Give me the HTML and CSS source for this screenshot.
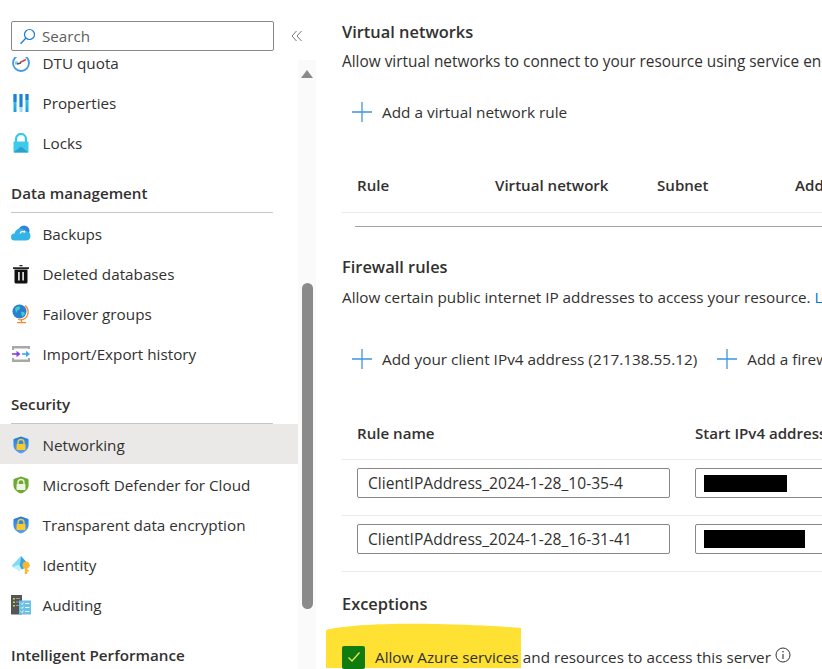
FILE: index.html
```html
<!DOCTYPE html>
<html lang="en">
<head>
<meta charset="utf-8">
<title>Networking</title>
<link rel="stylesheet" href="styles.css">
</head>
<body>
<svg class="defs" width="0" height="0" aria-hidden="true">
  <defs>
    <linearGradient id="blue" x1="0" y1="0" x2="0" y2="1"><stop offset="0" stop-color="#1b7fe0"/><stop offset="1" stop-color="#5ea0ef"/></linearGradient>
    <linearGradient id="cyan" x1="0" y1="0" x2="0" y2="1"><stop offset="0" stop-color="#32d4f5"/><stop offset="1" stop-color="#1d9fd8"/></linearGradient>
    <symbol id="shield" viewBox="0 0 18 20"><path d="M9 .5 16.500 3c.6.2.9.6.9 1.200v6.300c0 4-3.800 7.200-8.400 9-4.600-1.800-8.400-5-8.400-9V4.200C.6 3.600.9 3.200 1.500 3z"/></symbol>
  </defs>
</svg>
<div class="page">
  <aside class="sidebar">
    <div class="search-row">
      <div class="search">
        <svg class="search-icon" width="17" height="17" viewBox="0 0 17 17"><circle cx="10.500" cy="6.500" r="5" fill="none" stroke="#1b7fd4" stroke-width="1.200"/><path d="M7 10 1.500 15.800" stroke="#1b7fd4" stroke-width="1.300" fill="none"/></svg>
        <span>Search</span>
      </div>
      <svg class="collapse" width="12" height="12" viewBox="0 0 12 12"><path d="M5.500 1 1 6l4.500 5M10.500 1 6 6l4.500 5" fill="none" stroke="#777" stroke-width="1"/></svg>
    </div>
    <div class="nav-wrap">
      <nav class="nav">
        <div class="nav-list">
          <a class="item"><svg class="ic" viewBox="0 0 20 20"><circle cx="10" cy="10" r="8" fill="none" stroke="#3f9ae8" stroke-width="1.800"/><path d="M4 8.500h3v3H4z" fill="#7cc8f0"/><path d="M9 9.500l6-3" stroke="#d0493a" stroke-width="1.500"/><path d="M6 11l4-1" stroke="#555" stroke-width="1.300"/></svg><span>DTU quota</span></a>
          <a class="item"><svg class="ic" viewBox="0 0 20 20"><rect x="2.500" y="1" width="3" height="18" fill="url(#cyan)"/><rect x="2.500" y="1" width="3" height="8" fill="#1d7fd8"/><rect x="8.500" y="1" width="3" height="18" fill="#9fdcf0"/><rect x="8.500" y="1" width="3" height="13" fill="#1d7fd8"/><rect x="14.500" y="1" width="3" height="18" fill="url(#cyan)"/><rect x="14.500" y="1" width="3" height="6" fill="#1d7fd8"/></svg><span>Properties</span></a>
          <a class="item"><svg class="ic" viewBox="0 0 20 20"><path d="M5 9V6a5 5 0 0 1 10 0v3" fill="none" stroke="#32c8f0" stroke-width="2.200"/><rect x="2.500" y="8.500" width="15" height="11" rx="1" fill="#3ecbea"/><path d="M2.500 19.500 10 13.500l7.500 6z" fill="#2a9fd0"/></svg><span>Locks</span></a>
        </div>
        <h3 class="group">Data management</h3>
        <div class="nav-list">
          <a class="item"><svg class="ic" viewBox="0 0 20 20"><circle cx="13" cy="7" r="5.500" fill="#2f86d8"/><path d="M3.500 16.500a3.500 3.500 0 0 1 0-7c.6-3 3-5 6-5 2 0 3.500 1 4.500 2.500 3 0 5.500 1.500 5.500 5 0 3-2 4.500-5 4.500z" fill="#33b4e8"/><path d="M9 9.500c1-2 3-2.500 5-1.500" fill="none" stroke="#fff" stroke-width="1.200"/><path d="M13.500 6l1.200 2.200-2.400.5z" fill="#fff"/></svg><span>Backups</span></a>
          <a class="item"><svg class="ic" viewBox="0 0 20 20"><path d="M8.500 1h3v1.200h-3z M2 3.300h16v1.600H2z" fill="#222"/><path d="M3.500 5.500h13V18a1.500 1.500 0 0 1-1.500 1.500H5A1.500 1.500 0 0 1 3.500 18z" fill="#111"/><path d="M7 8h1.800v8.500H7zM11.200 8H13v8.500h-1.800z" fill="#d8d8d8"/></svg><span>Deleted databases</span></a>
          <a class="item"><svg class="ic" viewBox="0 0 20 20"><path d="M14 1.500c4 3 4.300 9 .5 12.500-2 1.700-5 2.300-7.500 1.500" fill="none" stroke="#f28a2e" stroke-width="1.200"/><path d="M10.500 15.500V18M6 18.700h9" stroke="#f28a2e" stroke-width="1.300"/><circle cx="8.500" cy="7.500" r="7" fill="#2a7fd0"/><path d="M4 4.500c2-2 4-2.500 5-1.500.5 1.500-1 3-2.500 3.500L5 9zM10 8c2-.5 4 .5 4 2l-3 3z" fill="#3ed0c0"/></svg><span>Failover groups</span></a>
          <a class="item"><svg class="ic" viewBox="0 0 20 20"><path d="M1 2h18v2.500H1zM1 15.500h18V18H1zM1 2h2v4H1zM17 2h2v3h-2zM1 14h2v4H1zM17 14h2v4h-2z" fill="#a8a8a8"/><path d="M1 10h5.500" stroke="#8a3fdc" stroke-width="1.600"/><path d="M5.500 6.800 9.500 10l-4 3.200z" fill="#8a3fdc"/><path d="M11 10h5" stroke="#3fa8e8" stroke-width="1.600"/><path d="M15 6.800 19 10l-4 3.200z" fill="#3fa8e8"/></svg><span>Import/Export history</span></a>
        </div>
        <h3 class="group">Security</h3>
        <div class="nav-list">
          <a class="item active"><svg class="ic" viewBox="0 0 20 20"><use href="#shield" x="1.500" y="1" width="17" height="18" fill="url(#blue)"/><path d="M7 9V7.500a3 3 0 0 1 6 0V9" fill="none" stroke="#f7c92e" stroke-width="1.400"/><rect x="5.500" y="9" width="9" height="6" rx=".8" fill="#f7c92e"/></svg><span>Networking</span></a>
          <a class="item"><svg class="ic" viewBox="0 0 20 20"><use href="#shield" x="1.500" y="1" width="17" height="18" fill="#6eaa32"/><path d="M7 9V7.500a3 3 0 0 1 6 0V9" fill="none" stroke="#eef5e2" stroke-width="1.400"/><rect x="5.500" y="9" width="9" height="6" rx=".8" fill="#eef5e2"/></svg><span>Microsoft Defender for Cloud</span></a>
          <a class="item"><svg class="ic" viewBox="0 0 20 20"><use href="#shield" x="1.500" y="1" width="17" height="18" fill="url(#blue)"/><path d="M7 9V7.500a3 3 0 0 1 6 0V9" fill="none" stroke="#f7c92e" stroke-width="1.400"/><rect x="5.500" y="9" width="9" height="6" rx=".8" fill="#f7c92e"/></svg><span>Transparent data encryption</span></a>
          <a class="item"><svg class="ic" viewBox="0 0 20 20"><path d="M10 1 .5 11 8 15.500z" fill="#7fdcf5"/><path d="M10 1 8 15.500l11-4.500z" fill="#35a5e6"/><path d="M1.500 12 8 16l3-1.300-3-5z" fill="#c4f0fb"/><circle cx="15" cy="10" r="3.500" fill="#fbb62c"/><path d="M13.800 12h2.400v7h-2.400zM16 15h1.800v1.500H16z" fill="#fbb62c"/></svg><span>Identity</span></a>
          <a class="item"><svg class="ic" viewBox="0 0 20 20"><rect x="0" y="0" width="11" height="19.500" fill="#555"/><path d="M2 3h2v1.600H2zM2 6.500h2v1.600H2zM2 10h2v1.600H2z" fill="#c4d840"/><path d="M5 3h4v1H5zM5 6.500h4v1H5zM5 10h4v1H5z" fill="#999"/><rect x="8" y="5.500" width="12" height="14" fill="#6cc0e4"/><path d="M10 8.500l1 1 1.500-2M10 12.500l1 1 1.500-2M10 16.500l1 1 1.500-2" fill="none" stroke="#fff" stroke-width=".9"/><path d="M14 8.500h4.500M14 12.500h4.500M14 16.500h4.500" stroke="#e6f6fc" stroke-width="1"/></svg><span>Auditing</span></a>
        </div>
        <h3 class="group group-last">Intelligent Performance</h3>
      </nav>
      <div class="scrollbar">
        <span class="arrow"></span>
        <span class="thumb"></span>
      </div>
    </div>
  </aside>

  <main class="main">
    <section class="vnet">
      <h2>Virtual networks</h2>
      <p class="desc">Allow virtual networks to connect to your resource using service endpoints.</p>
      <div class="actions">
        <a class="add"><svg class="plus" viewBox="0 0 20 20"><path d="M0 10h20M10 0v20" stroke="#3d94df" stroke-width="1.300"/></svg>Add a virtual network rule</a>
      </div>
      <div class="thead vnet-head">
        <span class="c-rule">Rule</span><span class="c-net">Virtual network</span><span class="c-sub">Subnet</span><span>Address range</span>
      </div>
      <div class="hscroll"></div>
    </section>

    <section class="fw">
      <h2>Firewall rules</h2>
      <p class="desc">Allow certain public internet IP addresses to access your resource. <a class="link">Learn more</a></p>
      <div class="actions fw-actions">
        <a class="add"><svg class="plus" viewBox="0 0 20 20"><path d="M0 10h20M10 0v20" stroke="#3d94df" stroke-width="1.300"/></svg>Add your client IPv4 address (217.138.55.12)</a>
        <a class="add"><svg class="plus" viewBox="0 0 20 20"><path d="M0 10h20M10 0v20" stroke="#3d94df" stroke-width="1.300"/></svg>Add a firewall rule</a>
      </div>
      <div class="thead fw-head">
        <span class="c-name">Rule name</span><span>Start IPv4 address</span>
      </div>
      <div class="row">
        <div class="field name">ClientIPAddress_2024-1-28_10-35-4</div>
        <div class="field ip"><span class="redact r1"></span></div>
      </div>
      <div class="row">
        <div class="field name">ClientIPAddress_2024-1-28_16-31-41</div>
        <div class="field ip"><span class="redact r2"></span></div>
      </div>
    </section>

    <section class="exc">
      <svg class="marker" width="195" height="45" viewBox="0 0 195 45"><path d="M0 7C20 2 60 0 110 1c30 .5 60 2 85 4v40H0z" fill="#fee133"/></svg>
      <h2>Exceptions</h2>
      <div class="check-row">
        <span class="check"><svg width="14" height="12" viewBox="0 0 14 12"><path d="M1.500 6.500 5 10l7.500-8.500" fill="none" stroke="#e8e85a" stroke-width="1.300"/></svg></span>
        <span class="check-label">Allow Azure services and resources to access this server</span>
        <svg class="info" width="16" height="16" viewBox="0 0 16 16"><circle cx="8" cy="8" r="7" fill="none" stroke="#333" stroke-width="1"/><path d="M8 7v5" stroke="#333" stroke-width="1.100"/><circle cx="8" cy="4.800" r=".8" fill="#333"/></svg>
      </div>
    </section>
  </main>
</div>
</body>
</html>
```
FILE: styles.css
```css
* { box-sizing: border-box; }
html, body { margin: 0; height: 669px; overflow: hidden; background: #fff; }
body { font-family: "Open Sans", "Noto Sans", "Liberation Sans", sans-serif; font-size: 15px; color: #323130; }
.defs { position: absolute; }
.page { display: flex; height: 669px; overflow: hidden; }

.sidebar { width: 316px; flex: none; display: flex; flex-direction: column; min-height: 0; }
.search-row { height: 57px; flex: none; padding: 21px 0 0 11px; display: flex; align-items: flex-start; }
.search { width: 263px; height: 30px; border: 1px solid #8a8886; border-radius: 2px; display: flex; align-items: center; padding-left: 7px; gap: 6px; color: #605e5c; font-size: 15.2px; }
.search-icon { flex: none; }
.collapse { margin: 9px 0 0 17px; }

.nav-wrap { flex: 1; display: flex; min-height: 0; }
.nav { width: 298px; flex: none; overflow: hidden; }
.nav-list { display: flex; flex-direction: column; }
.nav-list:first-child { margin-top: -15px; }
.item { height: 40px; flex: none; display: flex; align-items: center; padding: 1px 0 0 10.5px; gap: 12px; font-size: 15.25px; }
.item.active { background: #ebe9e7; }
.ic { width: 20px; height: 20px; flex: none; }
.group { height: 51px; margin: 0 11px 0; padding-top: 21px; width: 262px; border-bottom: 1px solid #c8c6c4; font-size: 15.2px; font-weight: 600; line-height: 20px; }
.group-last { border-bottom: 0; }

.scrollbar { width: 18px; background: #fafafa; margin-top: 3px; display: flex; flex-direction: column; align-items: center; }
.arrow { margin-top: 10px; width: 0; height: 0; border-left: 6px solid transparent; border-right: 6px solid transparent; border-bottom: 8px solid #8a8a8a; }
.thumb { margin-top: 205px; width: 11px; height: 326px; border-radius: 6px; background: #8a8a8a; }

.main { flex: 1; min-width: 0; padding: 0 0 0 26px; position: relative; overflow: hidden; white-space: nowrap; }
h2 { margin: 0; font-size: 16.4px; font-weight: 600; line-height: 22px; }
.desc { margin: 0; line-height: 20px; font-size: 15.25px; }
.link { color: #0078d4; }
.vnet { padding-top: 21px; }
.vnet .desc { margin-top: 9px; font-size: 15.4px; }
.actions { display: flex; gap: 20px; padding-left: 10px; }
.vnet .actions { margin-top: 29px; }
.add { display: flex; align-items: center; gap: 10px; height: 22px; font-size: 15.35px; }
.plus { width: 20px; height: 20px; flex: none; }
.thead { display: flex; font-weight: 600; border-bottom: 1px solid #edebe9; padding-left: 15px; line-height: 20px; width: 600px; font-size: 15.1px; }
.vnet-head { margin-top: 52px; height: 38px; }
.c-rule { width: 138px; }
.c-net { width: 162px; }
.c-sub { width: 138px; }
.hscroll { height: 1px; background: #a3a3a3; margin: 13px 0 0 13px; width: 600px; }

.fw { margin-top: 29px; }
.fw .desc { margin-top: 9px; }
.fw-actions { margin-top: 41px; }
.fw-head { margin-top: 53px; height: 37px; }
.c-name { width: 338px; }
.row { display: flex; gap: 25px; padding: 8px 0 18px 15px; height: 56px; border-bottom: 1px solid #edebe9; width: 600px; }
.field { height: 30px; border: 1px solid #8a8886; border-radius: 2px; display: flex; align-items: center; padding-left: 10px; font-size: 15.6px; }
.name { width: 313px; flex: none; }
.ip { width: 200px; flex: none; padding-left: 8px; }
.redact { display: block; background: #000; }
.r1 { width: 83px; height: 17px; }
.r2 { width: 101px; height: 18px; }

.exc { position: relative; padding-top: 21px; }
.exc > h2, .check-row { position: relative; }
.marker { position: absolute; left: -16px; top: 51px; }
.check-row { display: flex; align-items: center; margin-top: 30px; height: 24px; }
.check { width: 23px; height: 23px; background: #107c10; border-radius: 2px; display: flex; align-items: center; justify-content: center; margin-right: 10px; flex: none; }
.check-label { font-size: 15.25px; }
.info { margin: -4px 0 0 4px; flex: none; }
```
